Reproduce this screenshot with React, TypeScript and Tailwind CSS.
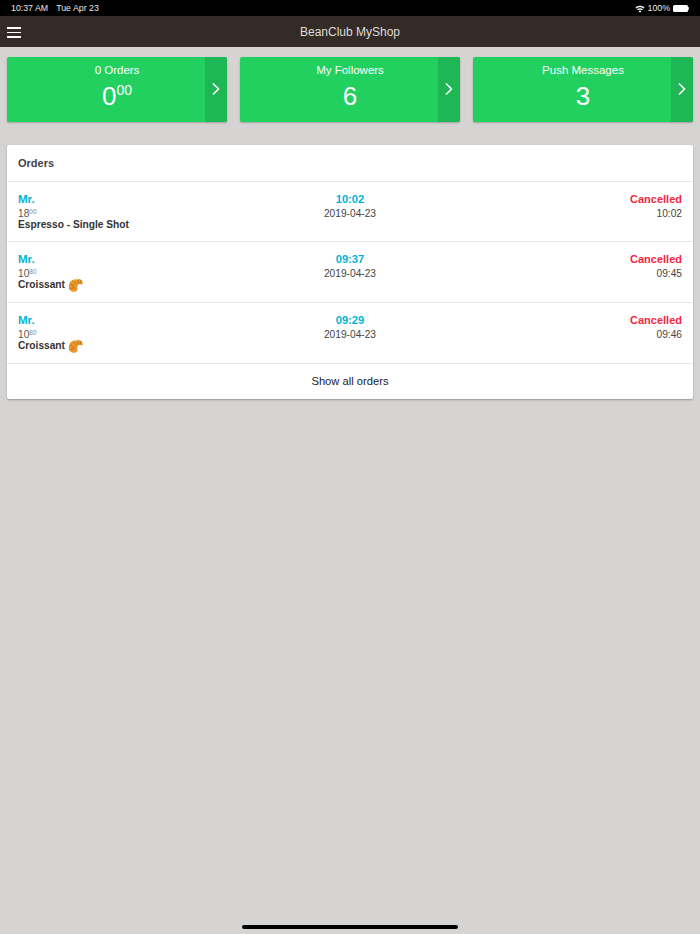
import React from "react";

const Chevron = () => (
  <svg width="10" height="14" viewBox="0 0 10 14" fill="none" className="mb-[2px]">
    <path d="M2 1.5 L7.5 7 L2 12.5" stroke="#fff" strokeWidth="1.6" />
  </svg>
);

const Croissant = () => (
  <svg width="15" height="15" viewBox="0 0 15 15" className="ml-[3px]">
    <path d="M0.8 8.5 C0.8 3.6 5 0.8 9.5 0.8 C12.8 0.8 14.8 2.6 14.8 5.4 C14.8 6.4 14 6.8 13.2 6.4 C12.4 6 11.2 6 10.4 6.6 C9.6 7.2 9.2 8.2 9.4 9.4 C9.6 10.4 9.8 11.4 9.2 12.2 C8.4 13.4 6.8 14 5.2 13.8 C2.6 13.6 0.8 11.6 0.8 8.5 Z" fill="#E8982C" />
    <path d="M2 5.6 L6.4 9 M5 2.6 L8.6 6.4 M9.4 1.2 L10.8 5.4 M13 2 L12.2 5.4 M1.2 10.2 L6.8 10" stroke="#B56E16" strokeWidth="0.8" fill="none" />
    <path d="M5.8 2.2 C7.4 1.4 9.2 1.3 11 1.8" stroke="#FAD083" strokeWidth="0.9" fill="none" />
  </svg>
);

const Wifi = () => (
  <svg width="10" height="8" viewBox="0 0 12 9" fill="#fff">
    <path d="M6 9 L4.2 6.9 C5.2 6 6.8 6 7.8 6.9 Z" />
    <path d="M3.4 6 L2.4 4.8 C4.5 3 7.5 3 9.6 4.8 L8.6 6 C7.1 4.7 4.9 4.7 3.4 6 Z" />
    <path d="M1.6 3.9 L0.5 2.7 C3.6 -0.1 8.4 -0.1 11.5 2.7 L10.4 3.9 C7.9 1.7 4.1 1.7 1.6 3.9 Z" />
  </svg>
);

const Card = ({ title, children }: { title: string; children: React.ReactNode }) => (
  <div className="flex-1 h-[65px] flex rounded-[2px] overflow-hidden bg-[#22d05f] shadow-[0_1px_2px_rgba(0,0,0,0.25)]">
    <div className="flex-1 flex flex-col items-center text-white pl-[22px]">
      <div className="text-[11.5px] leading-[14px] mt-[6px]">{title}</div>
      <div className="text-[26px] leading-[30px] mt-[4px]">{children}</div>
    </div>
    <div className="w-[22px] bg-[#1fb655] flex items-center justify-center">
      <Chevron />
    </div>
  </div>
);

const Row = ({ first, price, cents, item, time, date, end, emoji }: { first?: boolean; price: string; cents: string; item: string; time: string; date: string; end: string; emoji?: boolean }) => (
  <div className={`${first ? "h-[60px]" : "h-[61px]"} border-b border-[#e6e6e6] px-[11px] pt-[10px] grid grid-cols-3`}>
    <div>
      <div className="text-[11.5px] leading-[14px] font-bold text-[#00b4d8]">Mr.</div>
      <div className="text-[10.2px] leading-[11px] text-[#555] mt-[2px]">
        {price}
        <sup className="text-[6.5px] text-[#888] top-[-3px]">{cents}</sup>
      </div>
      <div className="flex items-center h-[12px] text-[10.2px] leading-[12px] font-bold text-[#333]">
        {item}
        {emoji && <Croissant />}
      </div>
    </div>
    <div className="text-center">
      <div className="text-[11.2px] leading-[14px] font-bold text-[#00b4d8]">{time}</div>
      <div className="text-[10.2px] leading-[12px] text-[#444] mt-[2px]">{date}</div>
    </div>
    <div className="text-right">
      <div className="text-[11px] leading-[14px] font-bold text-[#f5263f]">Cancelled</div>
      <div className="text-[10.2px] leading-[12px] text-[#444] mt-[2px]">{end}</div>
    </div>
  </div>
);

export default function App() {
  return (
    <div className="w-[700px] h-[934px] bg-[#d5d4d2] flex flex-col relative overflow-hidden font-['Liberation_Sans',sans-serif]">
      <div className="h-[16px] bg-black text-white text-[8.8px] flex items-center justify-between pl-[11px] pr-[11px] pt-[1px]">
        <div className="flex gap-[8px] text-[#e8e8e8]">
          <span>10:37 AM</span>
          <span>Tue Apr 23</span>
        </div>
        <div className="flex items-center gap-[3px] text-[#e8e8e8]">
          <Wifi />
          <span>100%</span>
          <div className="flex items-center">
            <div className="w-[15px] h-[7px] bg-white rounded-[1.5px]" />
            <div className="w-[1px] h-[3px] bg-[#bbb]" />
          </div>
        </div>
      </div>
      <div className="h-[31px] bg-[#352b26] flex items-center justify-center relative text-[#dedbd8] text-[12px]">
        <div className="absolute left-[7px] top-[11px] flex flex-col gap-[3px]">
          <div className="w-[14px] h-[1.5px] bg-white" />
          <div className="w-[14px] h-[1.5px] bg-white" />
          <div className="w-[14px] h-[1.5px] bg-white" />
        </div>
        BeanClub MyShop
      </div>
      <div className="flex gap-[13px] px-[7px] mt-[10px]">
        <Card title="0 Orders">
          0<sup className="text-[14px] top-[-10px]">00</sup>
        </Card>
        <Card title="My Followers">6</Card>
        <Card title="Push Messages">3</Card>
      </div>
      <div className="mx-[7px] mt-[23px] bg-white rounded-[2px] shadow-[0_1px_2px_rgba(0,0,0,0.3)]">
        <div className="h-[37px] border-b border-[#e6e6e6] flex items-center px-[11px] text-[11px] font-bold text-[#444]">Orders</div>
        <Row first price="18" cents="00" item="Espresso - Single Shot" time="10:02" date="2019-04-23" end="10:02" />
        <Row price="10" cents="80" item="Croissant" time="09:37" date="2019-04-23" end="09:45" emoji />
        <Row price="10" cents="80" item="Croissant" time="09:29" date="2019-04-23" end="09:46" emoji />
        <div className="h-[35px] flex items-center justify-center text-[11.2px] text-[#222]">Show all orders</div>
      </div>
      <div className="absolute left-[242px] bottom-[5px] w-[216px] h-[4px] rounded-full bg-black" />
    </div>
  );
}
